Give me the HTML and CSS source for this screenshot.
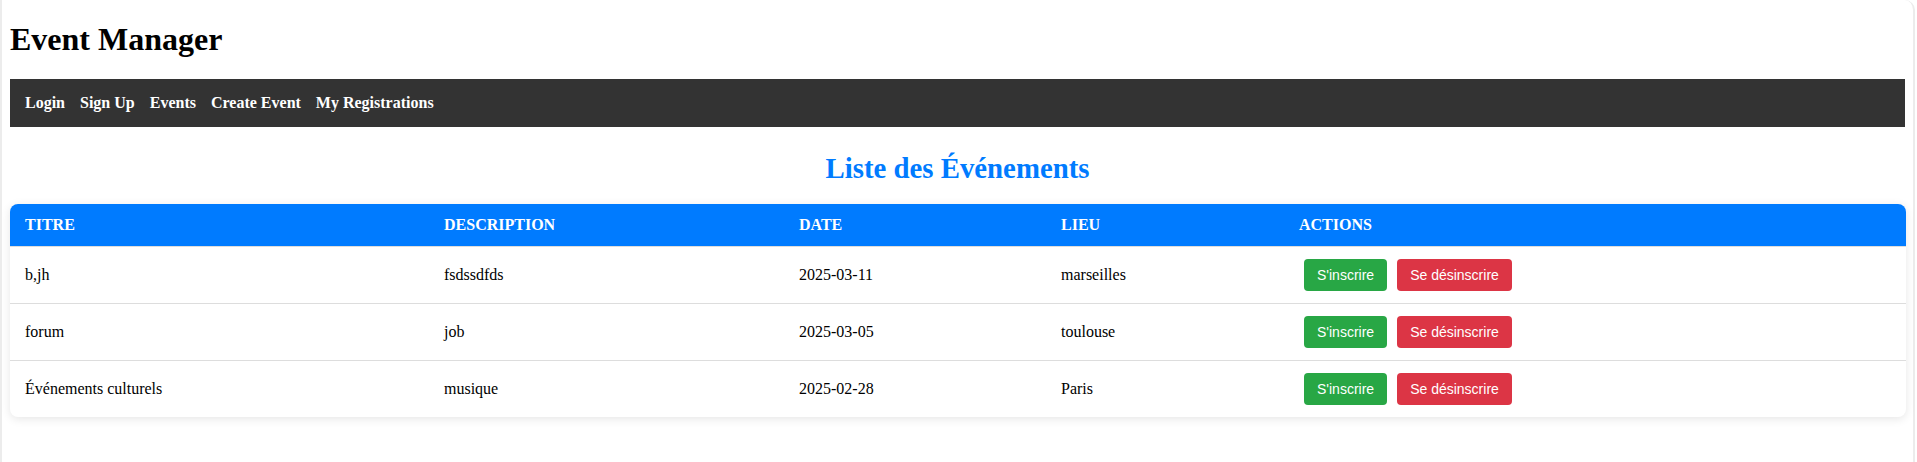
FILE: index.html
```html
<!DOCTYPE html>
<html lang="fr">
<head>
<meta charset="utf-8">
<title>Event Manager</title>
<link rel="stylesheet" href="styles.css">
</head>
<body>
<div class="frame">
  <h1 class="brand">Event Manager</h1>
  <nav class="navbar">
    <a href="#">Login</a>
    <a href="#">Sign Up</a>
    <a href="#">Events</a>
    <a href="#">Create Event</a>
    <a href="#">My Registrations</a>
  </nav>
  <h2 class="page-title">Liste des Événements</h2>
  <table class="events">
    <colgroup>
      <col class="col-title">
      <col class="col-desc">
      <col class="col-date">
      <col class="col-place">
      <col class="col-actions">
    </colgroup>
    <thead>
      <tr>
        <th>Titre</th>
        <th>Description</th>
        <th>Date</th>
        <th>Lieu</th>
        <th>Actions</th>
      </tr>
    </thead>
    <tbody>
      <tr>
        <td>b,jh</td>
        <td>fsdssdfds</td>
        <td>2025-03-11</td>
        <td>marseilles</td>
        <td><button class="btn btn-green">S'inscrire</button><button class="btn btn-red">Se désinscrire</button></td>
      </tr>
      <tr>
        <td>forum</td>
        <td>job</td>
        <td>2025-03-05</td>
        <td>toulouse</td>
        <td><button class="btn btn-green">S'inscrire</button><button class="btn btn-red">Se désinscrire</button></td>
      </tr>
      <tr>
        <td>Événements culturels</td>
        <td>musique</td>
        <td>2025-02-28</td>
        <td>Paris</td>
        <td><button class="btn btn-green">S'inscrire</button><button class="btn btn-red">Se désinscrire</button></td>
      </tr>
    </tbody>
  </table>
</div>
</body>
</html>
```

FILE: styles.css
```css
html, body {
  margin: 0;
  padding: 0;
  background: #ffffff;
}

body {
  font-family: "Liberation Serif", "Times New Roman", serif;
  color: #000;
}

.frame {
  box-sizing: border-box;
  width: 1915px;
  min-height: 462px;
  border-left: 2px solid #ececec;
  border-right: 2px solid #ececec;
  border-top-right-radius: 10px;
  padding: 21px 8px 20px 8px;
}

.brand {
  font-size: 32px;
  font-weight: bold;
  margin: 0 0 21px 0;
  line-height: 37px;
}

.navbar {
  display: flex;
  gap: 15px;
  background: #333333;
  padding: 15px;
}

.navbar a {
  color: #ffffff;
  font-weight: bold;
  font-size: 16px;
  text-decoration: none;
  line-height: 18px;
}

.page-title {
  text-align: center;
  color: #007bff;
  font-size: 28.8px;
  font-weight: bold;
  margin: 25px 0 20px 0;
  line-height: 32px;
}

.events {
  width: 100%;
  table-layout: fixed;
  border-collapse: separate;
  border-spacing: 0;
  border-radius: 8px;
  overflow: hidden;
  box-shadow: 0 2px 10px rgba(0, 0, 0, 0.1);
  font-size: 16px;
}

.col-title { width: 419px; }
.col-desc { width: 355px; }
.col-date { width: 262px; }
.col-place { width: 238px; }
.col-actions { width: 622px; }

.events th {
  background: #007bff;
  color: #ffffff;
  text-transform: uppercase;
  text-align: left;
  font-weight: bold;
  padding: 12px 15px;
  line-height: 18px;
  border-bottom: 1px solid #dddddd;
}

.events td {
  padding: 12px 15px;
  text-align: left;
  border-bottom: 1px solid #dddddd;
}

.events tbody tr:last-child td {
  border-bottom: none;
}

.btn {
  font-family: "Liberation Sans", Arial, sans-serif;
  font-size: 14px;
  line-height: 16px;
  color: #ffffff;
  border: none;
  border-radius: 4px;
  padding: 8px 13px;
  margin: 0 5px;
  cursor: pointer;
}

.btn-green {
  background: #28a745;
}

.btn-red {
  background: #dc3545;
}
```
